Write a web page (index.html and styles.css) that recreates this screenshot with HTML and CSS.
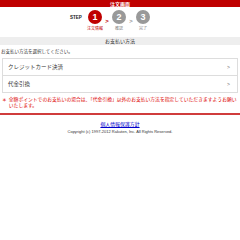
FILE: index.html
```html
<!DOCTYPE html>
<html lang="ja">
<head>
<meta charset="utf-8">
<link rel="stylesheet" href="styles.css">
</head>
<body>
<div class="top">注文画面</div>
<div class="steps">
  <div class="step-label">STEP</div>
  <div class="step active"><div class="circle">1</div><div class="name">注文情報</div></div>
  <div class="arrow active">&gt;</div>
  <div class="step"><div class="circle">2</div><div class="name">確認</div></div>
  <div class="arrow">&gt;</div>
  <div class="step"><div class="circle">3</div><div class="name">完了</div></div>
</div>
<div class="section-title">お支払い方法</div>
<p class="lead">お支払い方法を選択してください。</p>
<ul class="methods">
  <li class="method"><span>クレジットカード決済</span><span class="chev">&gt;</span></li>
  <li class="method"><span>代金引換</span><span class="chev">&gt;</span></li>
</ul>
<div class="notice"><span class="mark">＊</span><span>全額ポイントでのお支払いの場合は、「代金引換」以外のお支払い方法を指定していただきますようお願いいたします。</span></div>
<div class="footer">
  <p class="link-row"><a class="link" href="#">個人情報保護方針</a></p>
  <p class="copy">Copyright (c) 1997-2012 Rakuten, Inc. All Rights Reserved.</p>
</div>
</body>
</html>
```
FILE: styles.css
```css
html, body {
  margin: 0;
  padding: 0;
  background: #fff;
}
body {
  font-family: "Noto Sans CJK JP", "Noto Sans", sans-serif;
  color: #333;
}
.top {
  height: 7px;
  background: #bf0000;
  color: #fff;
  font-size: 5px;
  font-weight: bold;
  line-height: 7px;
  text-align: center;
}
.steps {
  display: flex;
  align-items: flex-start;
  padding: 3px 0 0 70px;
  height: 27px;
}
.step-label {
  font-family: "Liberation Sans", sans-serif;
  font-size: 4.5px;
  font-weight: bold;
  color: #222;
  margin-top: 5px;
  width: 18px;
}
.step {
  width: 14px;
  display: flex;
  flex-direction: column;
  align-items: center;
}
.circle {
  width: 14px;
  height: 14px;
  border-radius: 50%;
  background: #999;
  color: #fff;
  font-family: "Liberation Sans", sans-serif;
  font-weight: bold;
  font-size: 9px;
  line-height: 14px;
  text-align: center;
}
.active .circle {
  background: #bf0000;
}
.name {
  margin-top: 2px;
  font-size: 4px;
  line-height: 5px;
  color: #888;
  white-space: nowrap;
}
.active .name {
  color: #bf0000;
}
.arrow {
  width: 10px;
  text-align: center;
  font-family: "Liberation Sans", sans-serif;
  font-size: 6px;
  font-weight: bold;
  color: #999;
  margin-top: 8px;
}
.arrow.active {
  color: #bf0000;
}
.section-title {
  height: 8px;
  background: #eee;
  font-size: 5px;
  line-height: 8px;
  text-align: center;
  color: #333;
}
.lead {
  margin: 2px 0 0 1px;
  font-size: 4.5px;
  line-height: 8px;
}
.methods {
  list-style: none;
  margin: 3px 2px 0;
  padding: 0;
  border: 1px solid #ddd;
}
.method {
  display: flex;
  justify-content: space-between;
  align-items: center;
  height: 16px;
  padding: 0 7px 0 5px;
  font-size: 5.5px;
  color: #333;
}
.method + .method {
  border-top: 1px solid #ddd;
}
.chev {
  font-family: "Liberation Sans", sans-serif;
  font-size: 5px;
  color: #666;
}
.notice {
  display: flex;
  gap: 2px;
  margin: 3px 2px 0;
  color: #d00;
  font-size: 4.8px;
  line-height: 6px;
}
.mark {
  flex: none;
}
.footer {
  border-top: 2px solid #d03c3c;
  margin-top: 5px;
  padding-top: 5px;
  text-align: center;
  font-size: 4.9px;
  line-height: 7px;
}
.link-row {
  margin: 0;
}
.link {
  color: #00c;
}
.copy {
  margin: 2px 0 0;
  font-family: "Liberation Sans", sans-serif;
  font-size: 4px;
  line-height: 6px;
  color: #333;
}
```
